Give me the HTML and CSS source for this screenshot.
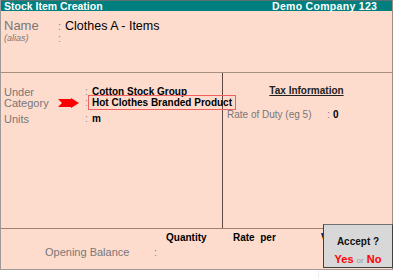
FILE: index.html
```html
<!DOCTYPE html>
<html>
<head>
<meta charset="utf-8">
<link rel="stylesheet" href="styles.css">
</head>
<body>
<div class="screen">
  <div class="titlebar">
    <span class="title">Stock Item Creation</span>
    <span class="company">Demo Company 123</span>
  </div>
  <div class="top">
    <div class="namerow">
      <span class="lbl name-lbl">Name</span>
      <span class="colon">:</span>
      <span class="name-val">Clothes A - Items</span>
    </div>
    <div class="aliasrow">
      <span class="alias-lbl">(alias)</span>
      <span class="colon">:</span>
    </div>
  </div>
  <div class="middle">
    <div class="left">
      <div class="row">
        <span class="lbl">Under</span>
        <span class="colon">:</span>
        <span class="val">Cotton Stock Group</span>
      </div>
      <div class="row">
        <span class="lbl">Category</span>
        <svg class="arrow" width="22" height="10" viewBox="0 0 22 10"><polygon points="0,1 13,1 13,0 21,5 13,10 13,9 0,9 4,5" fill="#f00"/></svg>
        <span class="colon">:</span>
        <span class="val boxed">Hot Clothes Branded Product</span>
      </div>
      <div class="row units">
        <span class="lbl">Units</span>
        <span class="colon">:</span>
        <span class="val">m</span>
      </div>
    </div>
    <div class="right">
      <div class="taxhead">Tax Information</div>
      <div class="rate">
        <span class="rate-lbl">Rate of Duty (eg 5)</span>
        <span class="colon">:</span>
        <span class="val">0</span>
      </div>
    </div>
  </div>
  <div class="bottom">
    <div class="heads">
      <span class="qty">Quantity</span>
      <span class="rateper">Rate&nbsp; per</span>
      <span class="value">V</span>
    </div>
    <div class="obrow">
      <span class="ob-lbl">Opening Balance</span>
      <span class="colon">:</span>
    </div>
  </div>
  <div class="accept">
    <div class="acc-q">Accept ?</div>
    <div class="acc-a"><span class="yn">Yes</span> <span class="or">or</span> <span class="yn">No</span></div>
  </div>
</div>
<div class="below"></div>
</body>
</html>
```
FILE: styles.css
```css
html, body { margin: 0; padding: 0; background: #fff; }
body { font-family: "Liberation Sans", Arial, sans-serif; width: 400px; height: 278px; overflow: hidden; position: relative; white-space: nowrap; }
.screen {
  position: relative;
  width: 391px;
  height: 269px;
  background: #fedccd;
  border-left: 1px solid #a09a98;
  border-right: 1px solid #a08c84;
  border-bottom: 1px solid #a09a98;
  display: flex;
  flex-direction: column;
}
.titlebar {
  height: 10px;
  border-top: 1px solid #5a7070;
  background: #007f7f;
  color: #fff;
  font-weight: bold;
  font-size: 10.5px;
  line-height: 10px;
  display: flex;
  padding-left: 3px;
}
.title { width: 268px; }
.company { letter-spacing: 0.3px; }
.top {
  height: 61px;
  border-bottom: 1px solid #a89080;
  padding-left: 3px;
}
.colon { color: #888; }
.lbl { color: #777; font-size: 11px; }
.namerow { display: flex; align-items: baseline; margin-top: 7px; height: 14px; }
.name-lbl { font-size: 13px; width: 54px; color: #777; }
.namerow .colon { width: 7px; font-size: 11px; }
.name-val { font-size: 12.5px; color: #000; }
.aliasrow { display: flex; font-size: 10px; margin-top: 1px; }
.alias-lbl { font-style: italic; color: #777; width: 54px; font-size: 9px; }
.middle { height: 155px; display: flex; border-bottom: 1px solid #a08070; }
.left { width: 222px; flex: none; border-right: 1px solid #604840; padding-top: 13px; padding-left: 3px; box-sizing: border-box; position: relative; z-index: 1; }
.row { display: flex; align-items: center; height: 11px; position: relative; font-size: 11px; }
.row .lbl { width: 81px; flex: none; }
.row .colon { width: 7px; flex: none; font-size: 10px; }
.val { font-weight: bold; color: #000; font-size: 10px; }
.arrow { position: absolute; left: 54px; top: 1px; }
.boxed {
  flex: 0 0 146px;
  width: 146px;
  min-width: 146px;
  box-sizing: border-box;
  outline: 1px solid #f06060;
  padding: 1px 0 1px 3px;
  margin-left: -3px;
  line-height: 11px;
  font-size: 10px;
}
.units { margin-top: 5px; }
.right { flex: 1; padding-top: 12px; }
.taxhead { text-align: center; font-weight: bold; font-size: 10px; text-decoration: underline; color: #222; padding-right: 2px; }
.rate { display: flex; margin-top: 12px; padding-left: 4px; font-size: 11px; align-items: center; }
.rate-lbl { color: #777; width: 100px; font-size: 10px; }
.rate .colon { width: 6px; }
.bottom { flex: 1; position: relative; }
.heads { display: flex; font-weight: bold; font-size: 10px; color: #000; margin-top: 3px; height: 12px; }
.qty { margin-left: 165px; width: 67px; }
.rateper { width: 88px; }
.value { width: 2px; overflow: hidden; }
.obrow { display: flex; font-size: 11px; margin-top: 2px; }
.ob-lbl { margin-left: 44px; width: 109px; color: #777; font-size: 11px; }
.accept {
  position: absolute;
  left: 322px;
  top: 224px;
  width: 68px;
  height: 42px;
  background: #d8d8d8;
  border: 1px solid #404040;
  border-top-color: #707070;
  text-align: center;
}
.acc-q { font-weight: bold; font-size: 10px; margin-top: 11px; color: #111; }
.acc-a { font-size: 11px; margin-top: 6px; }
.yn { color: #f00; font-weight: bold; }
.or { color: #999; font-size: 8px; }
.below { position: absolute; left: 318px; top: 270px; width: 1px; height: 8px; background: #eee; }
```
